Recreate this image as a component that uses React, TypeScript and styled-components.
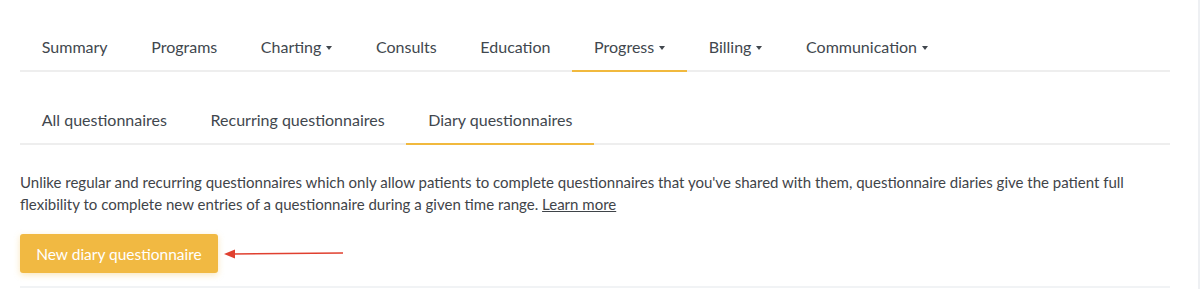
import React from 'react';
import styled, { createGlobalStyle } from 'styled-components';

const GlobalStyle = createGlobalStyle`
  * {
    box-sizing: border-box;
  }
  body {
    margin: 0;
    background: #fff;
    font-family: 'Lato', 'Noto Sans', Arial, sans-serif;
    color: #3f4449;
  }
`;

const Page = styled.div`
  width: 1200px;
  height: 289px;
  padding: 24px 28px 0 20px;
  border-right: 2px solid #eef0f3;
  overflow: hidden;
`;

const TabBar = styled.nav<{ $top: number }>`
  display: flex;
  margin-top: ${(p) => p.$top}px;
  border-bottom: 2px solid #eeeeee;
`;

const Tab = styled.div<{ $active?: boolean }>`
  display: flex;
  align-items: center;
  gap: 5px;
  padding: 12px 21.8px;
  margin-bottom: -2px;
  font-size: 16px;
  line-height: 22px;
  color: #41474e;
  border-bottom: 2px solid ${(p) => (p.$active ? '#f1b93e' : 'transparent')};
  white-space: nowrap;
`;

const Caret = styled.span`
  display: inline-block;
  width: 0;
  height: 0;
  border-left: 3.5px solid transparent;
  border-right: 3.5px solid transparent;
  border-top: 4px solid #41474e;
  margin-top: 1px;
`;

const Intro = styled.p`
  margin: 26px 0 0;
  font-size: 15px;
  line-height: 22px;
  color: #3f4449;

  a {
    color: #3f4449;
    text-decoration: underline;
  }
`;

const ActionRow = styled.div`
  display: flex;
  align-items: center;
  margin-top: 19px;
  padding-bottom: 13px;
  border-bottom: 2px solid #f1f3f5;
`;

const PrimaryButton = styled.button`
  height: 39px;
  width: 198px;
  padding: 0 14px;
  border: 0;
  border-radius: 3px;
  background: #f1b942;
  color: #fff;
  font-family: inherit;
  font-size: 15.5px;
  box-shadow: 0 2px 6px rgba(241, 185, 66, 0.35);
`;

const Pointer = styled.svg`
  margin-left: 6px;
  display: block;
`;

const mainTabs = [
  { label: 'Summary' },
  { label: 'Programs' },
  { label: 'Charting', menu: true },
  { label: 'Consults' },
  { label: 'Education' },
  { label: 'Progress', menu: true, active: true },
  { label: 'Billing', menu: true },
  { label: 'Communication', menu: true },
];

const subTabs = [
  { label: 'All questionnaires' },
  { label: 'Recurring questionnaires' },
  { label: 'Diary questionnaires', active: true },
];

export default function App() {
  return (
    <>
      <GlobalStyle />
      <Page>
        <TabBar $top={0}>
          {mainTabs.map((t) => (
            <Tab key={t.label} $active={t.active}>
              {t.label}
              {t.menu && <Caret />}
            </Tab>
          ))}
        </TabBar>
        <TabBar $top={25}>
          {subTabs.map((t) => (
            <Tab key={t.label} $active={t.active}>
              {t.label}
            </Tab>
          ))}
        </TabBar>
        <Intro>
          Unlike regular and recurring questionnaires which only allow patients to complete
          questionnaires that you've shared with them, questionnaire diaries give the patient full
          flexibility to complete new entries of a questionnaire during a given time range.{' '}
          <a href="#">Learn more</a>
        </Intro>
        <ActionRow>
          <PrimaryButton type="button">New diary questionnaire</PrimaryButton>
          <Pointer width="120" height="12" viewBox="0 0 120 12">
            <line x1="8" y1="6" x2="119" y2="5" stroke="#e0402f" strokeWidth="1.6" />
            <path d="M0 6 L11 1.5 L11 10.5 Z" fill="#e0402f" />
          </Pointer>
        </ActionRow>
      </Page>
    </>
  );
}
